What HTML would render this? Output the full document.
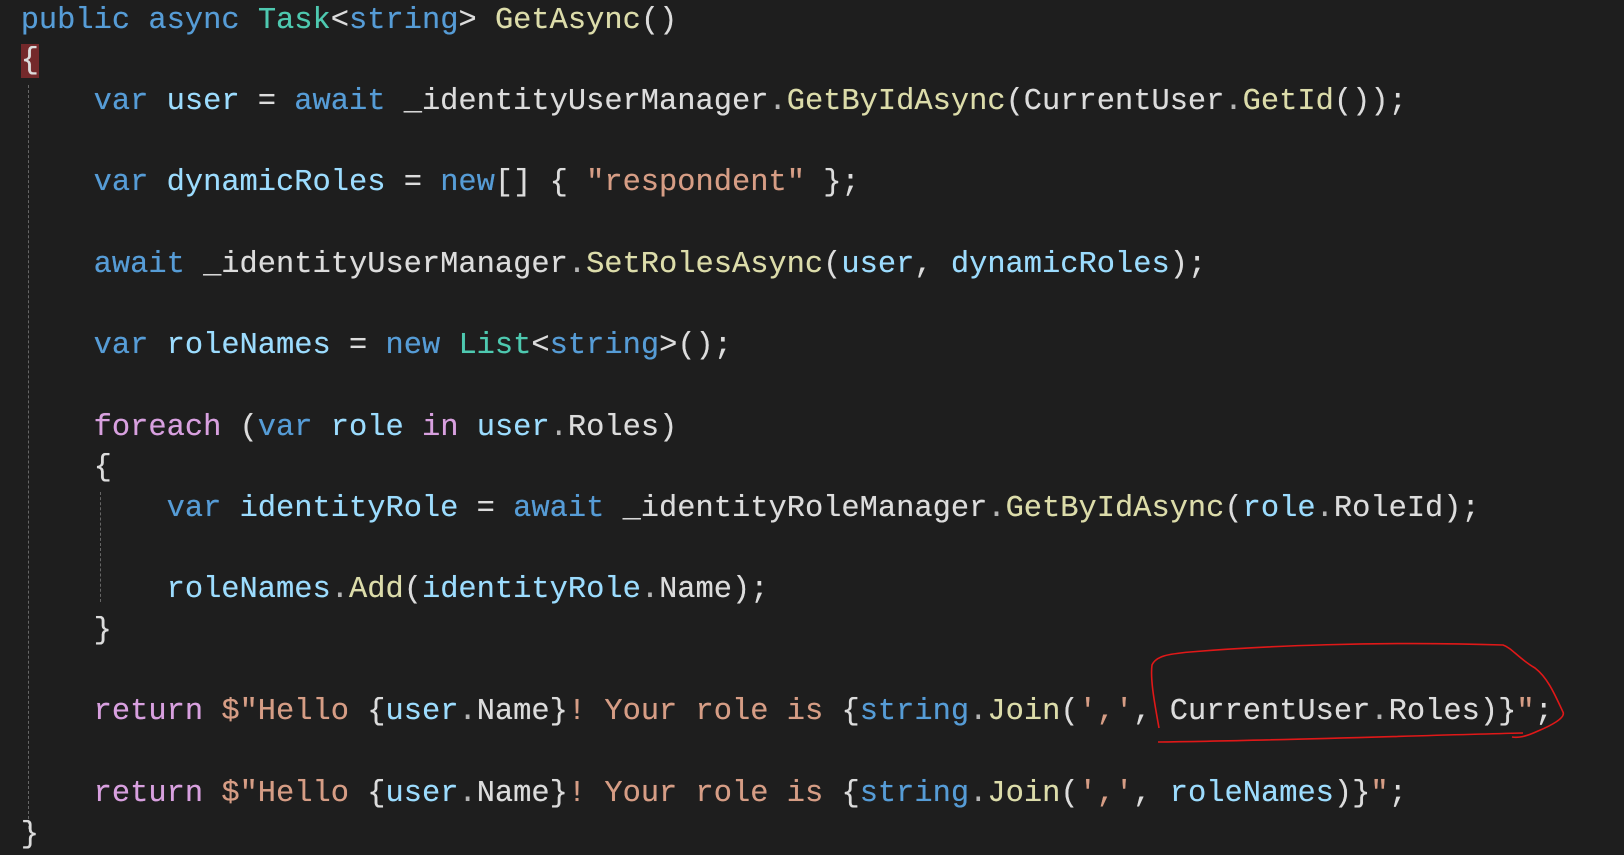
<!DOCTYPE html>
<html><head><meta charset="utf-8"><style>
body{margin:0;width:1624px;height:855px;background:#1e1e1e;overflow:hidden;position:relative}
pre{margin:0;position:absolute;left:20.7px;top:0.5px;font-family:"Liberation Mono","DejaVu Sans Mono",monospace;font-size:30.4px;line-height:40.7px;color:#dcdcdc;white-space:pre;text-shadow:0 0 0.4px currentColor}
.k{color:#569cd6}.t{color:#4ec9b0}.m{color:#dcdcaa}.v{color:#9cdcfe}.c{color:#d8a0df}.s{color:#d69d85}.p{color:#b4b4b4}
.hl{background:#74292b}
.g{position:absolute;width:0;border-left:1.5px dashed #666}
</style></head><body>
<div class="g" style="left:28px;top:85px;height:744px"></div>
<div class="g" style="left:100px;top:492px;height:110px"></div>
<pre><span class="k">public</span> <span class="k">async</span> <span class="t">Task</span>&lt;<span class="k">string</span>&gt; <span class="m">GetAsync</span>()
<span class="hl">{</span>
    <span class="k">var</span> <span class="v">user</span> = <span class="k">await</span> _identityUserManager<span class="p">.</span><span class="m">GetByIdAsync</span>(CurrentUser<span class="p">.</span><span class="m">GetId</span>());

    <span class="k">var</span> <span class="v">dynamicRoles</span> = <span class="k">new</span>[] { <span class="s">"respondent"</span> };

    <span class="k">await</span> _identityUserManager<span class="p">.</span><span class="m">SetRolesAsync</span>(<span class="v">user</span>, <span class="v">dynamicRoles</span>);

    <span class="k">var</span> <span class="v">roleNames</span> = <span class="k">new</span> <span class="t">List</span>&lt;<span class="k">string</span>&gt;();

    <span class="c">foreach</span> (<span class="k">var</span> <span class="v">role</span> <span class="c">in</span> <span class="v">user</span><span class="p">.</span>Roles)
    {
        <span class="k">var</span> <span class="v">identityRole</span> = <span class="k">await</span> _identityRoleManager<span class="p">.</span><span class="m">GetByIdAsync</span>(<span class="v">role</span><span class="p">.</span>RoleId);

        <span class="v">roleNames</span><span class="p">.</span><span class="m">Add</span>(<span class="v">identityRole</span><span class="p">.</span>Name);
    }

    <span class="c">return</span> <span class="s">$"Hello </span>{<span class="v">user</span><span class="p">.</span>Name}<span class="s">! Your role is </span>{<span class="k">string</span><span class="p">.</span><span class="m">Join</span>(<span class="s">','</span>, CurrentUser<span class="p">.</span>Roles)}<span class="s">"</span>;

    <span class="c">return</span> <span class="s">$"Hello </span>{<span class="v">user</span><span class="p">.</span>Name}<span class="s">! Your role is </span>{<span class="k">string</span><span class="p">.</span><span class="m">Join</span>(<span class="s">','</span>, <span class="v">roleNames</span>)}<span class="s">"</span>;
}</pre>
<svg width="1624" height="855" style="position:absolute;left:0;top:0" fill="none" stroke="#e01818" stroke-width="1.6">
<path d="M1159,728 C1155,705 1150,680 1152,665 C1156,656 1168,654 1190,652 C1260,646 1380,641 1503,645 C1512,648 1518,658 1535,668 C1548,678 1555,695 1563,712 C1566,718 1550,726 1538,731 C1525,737 1518,738 1512,737"/>
<path d="M1158,742 C1260,741 1400,736 1523,733"/>
</svg>
</body></html>
